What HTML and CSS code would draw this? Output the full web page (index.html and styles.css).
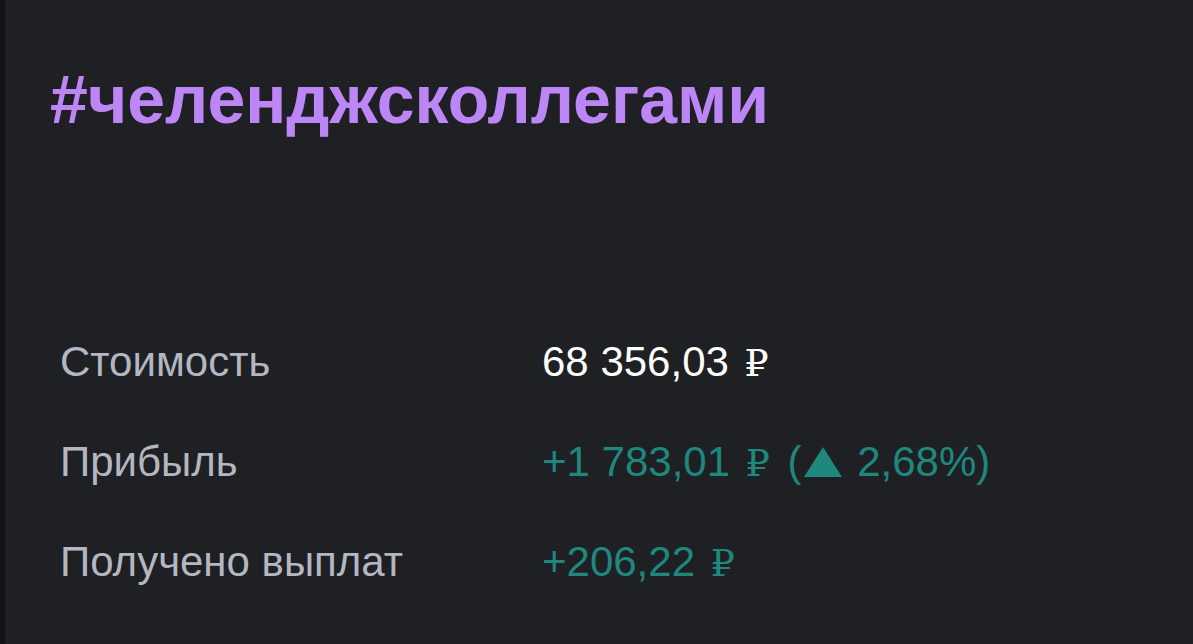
FILE: index.html
```html
<!DOCTYPE html>
<html lang="ru">
<head>
<meta charset="UTF-8" />
<title>#челенджсколлегами</title>
<link rel="stylesheet" href="styles.css">
</head>
<body>
<div class="edge"></div>
<div class="card">
    <h1 class="tag">#челенджсколлегами</h1>

    <div class="stats">
        <div class="row">
            <span class="label">Стоимость</span>
            <span class="value">68 356,03 <span class="rub">₽</span></span>
        </div>
        <div class="row">
            <span class="label">Прибыль</span>
            <span class="value up">+1 783,01 <span class="rub">₽</span> (<svg class="arrow" width="38" height="30" viewBox="0 0 38 30"><path d="M19 0 L38 30 L0 30 Z" fill="currentColor"/></svg> 2,68%)</span>
        </div>
        <div class="row">
            <span class="label">Получено выплат</span>
            <span class="value up">+206,22 <span class="rub">₽</span></span>
        </div>
    </div>
</div>
</body>
</html>
```

FILE: styles.css
```css
html, body {
    margin: 0;
    height: 100%;
}
body {
    display: flex;
    background: #1f2024;
    font-family: "Liberation Sans", Arial, sans-serif;
    overflow: hidden;
}
.edge {
    width: 5px;
    background: #141418;
    flex: none;
}
.card {
    flex: 1;
    padding: 60px 0 0 45px;
}
.tag {
    margin: 0;
    font-size: 68px;
    font-weight: bold;
    line-height: 78px;
    color: #bd86f6;
}
.stats {
    margin-top: 200px;
    padding-left: 10px;
}
.row {
    display: flex;
    height: 100px;
    font-size: 42px;
}
.label {
    width: 482px;
    color: #b3b7c1;
}
.value {
    color: #ffffff;
}
.value.up {
    color: #1e877e;
}
.rub {
    font-family: "Liberation Serif", "DejaVu Serif", serif;
    font-size: 38px;
    margin: 0 6px 0 4px;
}
.arrow {
    vertical-align: -1px;
    margin: 0 4px 0 2px;
}
```
